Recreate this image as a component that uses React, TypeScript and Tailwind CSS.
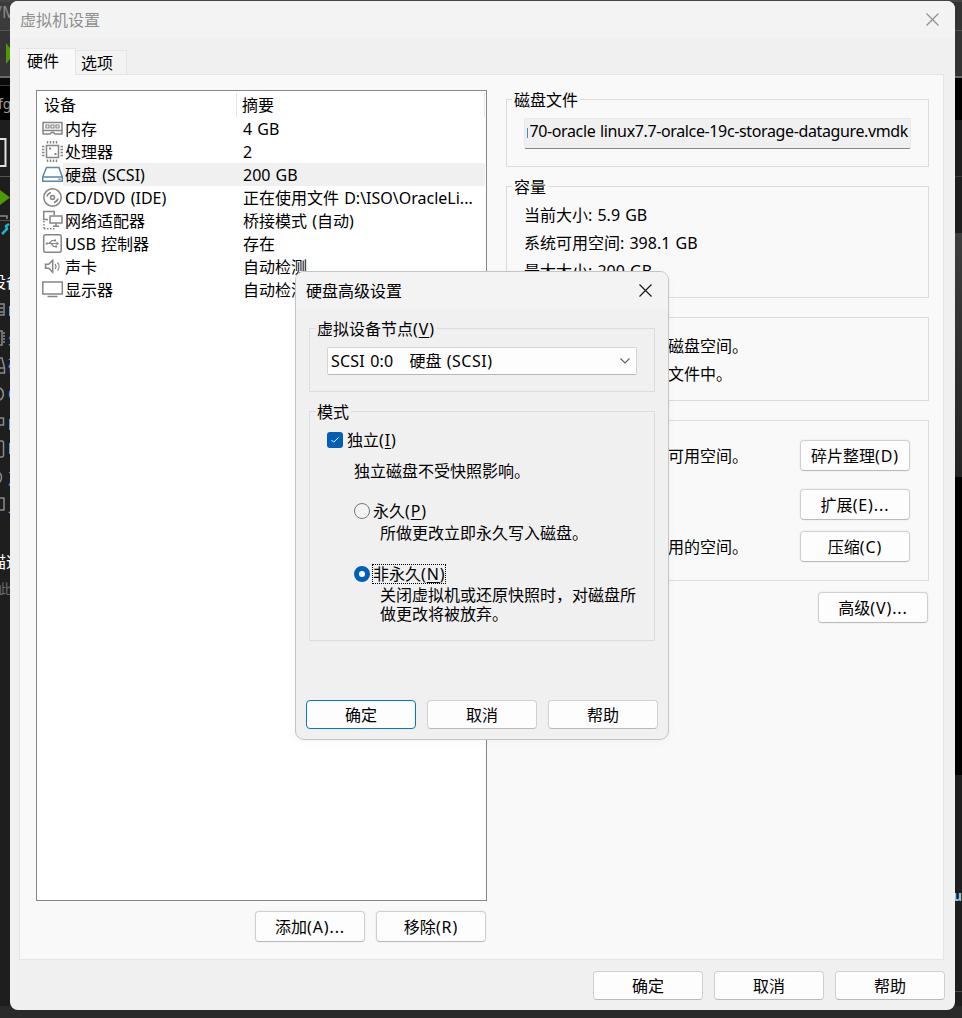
import type { ReactNode } from 'react';
import clsx from 'clsx';

type DeviceIconName = 'memory' | 'cpu' | 'disk' | 'cd' | 'network' | 'usb' | 'sound' | 'display';

interface Device {
  icon: DeviceIconName;
  name: string;
  summary: string;
}

const devices: Device[] = [
  { icon: 'memory', name: '内存', summary: '4 GB' },
  { icon: 'cpu', name: '处理器', summary: '2' },
  { icon: 'disk', name: '硬盘 (SCSI)', summary: '200 GB' },
  { icon: 'cd', name: 'CD/DVD (IDE)', summary: '正在使用文件 D:\\ISO\\OracleLi...' },
  { icon: 'network', name: '网络适配器', summary: '桥接模式 (自动)' },
  { icon: 'usb', name: 'USB 控制器', summary: '存在' },
  { icon: 'sound', name: '声卡', summary: '自动检测' },
  { icon: 'display', name: '显示器', summary: '自动检测' },
];

const iconShapes: Record<DeviceIconName, ReactNode> = {
  memory: (
    <>
      <path d="M1 5.500h19v8H1zM1 13.500v3.500h7l1.500-1.500h2l1.500 1.500h7v-3.500" />
      <path d="M4 8h3v3H4zM9 8h3v3H9zM14 8h3v3h-3z" strokeWidth="1.200" />
    </>
  ),
  cpu: (
    <>
      <path d="M4.500 5.500h12v12h-12z" />
      <path d="M5.500 1v2.500M8.500 1v2.500M11.500 1v2.500M14.500 1v2.500M5.500 19.500V22M8.500 19.500V22M11.500 19.500V22M14.500 19.500V22M0 6.500h2.500M0 9.500h2.500M0 12.500h2.500M0 15.500h2.500M18.500 6.500H21M18.500 9.500H21M18.500 12.500H21M18.500 15.500H21" />
      <path d="M7 8.500h2M12.500 14h2" strokeWidth="2" />
    </>
  ),
  disk: (
    <>
      <path d="M4.500 4.500h12.500L20.300 14v4.300H.7V14z" />
      <path d="M1 14h19.500M16.500 16.300h2" />
    </>
  ),
  cd: (
    <>
      <circle cx="10.500" cy="11.500" r="8.700" />
      <circle cx="10.500" cy="11.500" r="2" />
      <path d="M5 10.500a5.500 5.500 0 0 1 4-4M16 12.500a5.500 5.500 0 0 1-4 4" />
    </>
  ),
  network: (
    <>
      <path d="M6 10.500H1.700v-8h10.500v3.500" />
      <path d="M8 7h12v7H8zM14 14v3M11 17.300h6" />
      <path d="M2 12v8M2 19.700h12" strokeDasharray="1.500 1.500" />
    </>
  ),
  usb: (
    <>
      <rect x="1.700" y="2.700" width="17.500" height="17.500" rx="2" />
      <path d="M5 11.500h11M7 11.500l3-3h2M9 11.500l2.500 3H14" strokeWidth="1.200" />
      <path d="M14.500 9.500l2.500 2-2.500 2zM12 7.500h2v2h-2zM13 13.500h2v2h-2zM3.800 10.500h2v2h-2z" fill="currentColor" stroke="none" />
    </>
  ),
  sound: (
    <>
      <path d="M3.500 9.300h3.200l4-4v12l-4-4H3.500z" />
      <path d="M13 9a4 4 0 0 1 0 5M15.500 7.500a6 6 0 0 1 0 8" strokeWidth="1.200" />
    </>
  ),
  display: (
    <>
      <path d="M.8 4h19.500v12H.8z" />
      <path d="M5.500 18.500h10" />
    </>
  ),
};

function DeviceIcon({ name }: { name: DeviceIconName }) {
  return (
    <svg
      viewBox="0 0 22 23"
      fill="none"
      stroke="currentColor"
      strokeWidth="1.500"
      className={clsx('h-[23px] w-[22px] shrink-0', name === 'disk' ? 'text-[#5b87ad]' : 'text-[#858585]')}
    >
      {iconShapes[name]}
    </svg>
  );
}

function CloseIcon({ className }: { className: string }) {
  return (
    <svg viewBox="0 0 13 13" fill="none" stroke="currentColor" strokeWidth="1.200" className={clsx('size-[13px]', className)}>
      <path d="M.5.500l12 12M12.500.500l-12 12" />
    </svg>
  );
}

// Latin runs are set a little wider than the Chinese text beside them
function Latin({ children }: { children: ReactNode }) {
  return <span className="tracking-[0.900px]">{children}</span>;
}

function Mnemonic({ letter }: { letter: string }) {
  return (
    <Latin>
      (<u className="underline-offset-2">{letter}</u>)
    </Latin>
  );
}

function Button({ children, primary, tall }: { children: ReactNode; primary?: boolean; tall?: boolean }) {
  return (
    <button
      className={clsx(
        'flex w-[110px] shrink-0 items-center justify-center rounded-[4px] border bg-[#fdfdfd] leading-5',
        tall ? 'h-[31px] pt-px shadow-[0_0_0_1px_#f2f2f2]' : 'h-[29px]',
        primary ? 'border-[#0078d4]' : 'border-[#d0d0d0] border-b-[#bababa]',
      )}
    >
      {children}
    </button>
  );
}

function Group({ title, className, children }: { title: ReactNode; className: string; children: ReactNode }) {
  return (
    <fieldset className={clsx('border border-[#dcdcdc]', className)}>
      <legend className="ml-[5px] h-[19px] px-0.5 leading-[21px]">{title}</legend>
      {children}
    </fieldset>
  );
}

function DeviceList() {
  return (
    <div className="h-[811px] w-[451px] border border-[#828790] bg-white pt-0.5">
      <div className="flex h-6 leading-6">
        <div className="w-[200px] border-r border-[#e5e5e5] pl-[7px]">设备</div>
        <div className="w-[248px] border-r border-[#e5e5e5] pl-[5px]">摘要</div>
      </div>
      {devices.map((device) => (
        <div key={device.icon} className="flex h-[23px] pl-[5px] leading-6">
          <DeviceIcon name={device.icon} />
          <div className={clsx('-ml-px flex h-[23px] w-[422px]', device.icon === 'disk' && 'bg-[#f0f0f0]')}>
            <span className="w-[180px] pl-0.5 whitespace-nowrap">{device.name}</span>
            <span className="whitespace-nowrap">{device.summary}</span>
          </div>
        </div>
      ))}
    </div>
  );
}

function DiskDetails() {
  return (
    <div className="flex w-[423px] flex-col">
      <Group title="磁盘文件" className="h-[77px]">
        <div className="mt-[9px] ml-[17px] flex h-[31px] w-[387px] items-start justify-end overflow-hidden rounded-[2px] border border-[#e8e8e8] border-b-[#868686] bg-[#f0f0f0] px-0.5 leading-[25px] whitespace-nowrap">
          <span className="mt-[9px] mr-px h-2.5 w-px shrink-0 bg-[#3c8ad8]" />
          <span className="tracking-[-0.370px]">70-oracle linux7.7-oralce-19c-storage-datagure.vmdk</span>
        </div>
      </Group>
      <Group title="容量" className="mt-2.5 h-[121px]">
        <div className="ml-[17px] pt-[5px] leading-7">
          <p>当前大小: 5.9 GB</p>
          <p>系统可用空间: 398.1 GB</p>
          <p>最大大小: 200 GB</p>
        </div>
      </Group>
      <div className="mt-[19px] h-[84px] border border-[#dcdcdc] pt-[14px] pl-[17px] leading-7">
        <p>没有为此硬盘预分配磁盘空间。</p>
        <p>硬盘内容存储在多个文件中。</p>
      </div>
      <div className="mt-[19px] flex h-[161px] flex-col border border-[#dcdcdc] pt-[19px] pr-[18px] pl-[17px]">
        <div className="flex items-center justify-between">
          <span>整理文件碎片并整合可用空间。</span>
          <Button tall>
            碎片整理<Latin>(D)</Latin>
          </Button>
        </div>
        <div className="mt-[18px] flex justify-end">
          <Button tall>
            扩展<Latin>(E)...</Latin>
          </Button>
        </div>
        <div className="mt-[11px] flex items-center justify-between">
          <span>压缩磁盘以回收未使用的空间。</span>
          <Button tall>
            压缩<Latin>(C)</Latin>
          </Button>
        </div>
      </div>
      <div className="mt-[11px] flex justify-end pr-px">
        <Button tall>
          高级<Latin>(V)...</Latin>
        </Button>
      </div>
    </div>
  );
}

function SettingsWindow() {
  return (
    <div className="absolute top-px left-[10px] flex h-[1009px] w-[945px] flex-col overflow-hidden rounded-[8px] bg-[#f0f0f0]">
      <div className="flex h-[37px] shrink-0 items-center justify-between bg-[#f3f3f3] pr-4 pl-[10px] text-[#8f8f8f]">
        <span>虚拟机设置</span>
        <CloseIcon className="text-[#8f8f8f]" />
      </div>
      <div className="flex h-9 shrink-0 items-end pl-[9px]">
        <div className="relative -mb-px h-[27px] w-[57px] border border-b-0 border-[#e5e5e5] bg-[#f9f9f9] pl-[7px] leading-[25px]">硬件</div>
        <div className="h-6 w-[51px] border border-b-0 border-l-0 border-[#e5e5e5] bg-[#f3f3f3] pl-[5px] leading-[24px]">选项</div>
      </div>
      <div className="ml-[9px] flex h-[886px] w-[925px] shrink-0 border border-[#e5e5e5] bg-[#f9f9f9] pt-[15px] pl-4">
        <div className="flex flex-col">
          <DeviceList />
          <div className="mt-2.5 flex justify-end gap-[11px] pr-px">
            <Button tall>
              添加<Latin>(A)...</Latin>
            </Button>
            <Button tall>
              移除<Latin>(R)</Latin>
            </Button>
          </div>
        </div>
        <div className="ml-[19px]">
          <DiskDetails />
        </div>
      </div>
      <div className="mt-[11px] flex justify-end gap-[11px] pr-[10px]">
        <Button>确定</Button>
        <Button>取消</Button>
        <Button>帮助</Button>
      </div>
    </div>
  );
}

function AdvancedDialog() {
  return (
    <div className="absolute top-[271px] left-[295px] flex h-[469px] w-[374px] flex-col overflow-hidden rounded-[9px] border border-[#c4c4c4] bg-[#f0f0f0] shadow-[0_2px_8px_rgba(0,0,0,0.040)]">
      <div className="flex h-[37px] shrink-0 items-center justify-between bg-[#f3f3f3] pr-4 pl-[10px]">
        <span>硬盘高级设置</span>
        <CloseIcon className="text-[#1a1a1a]" />
      </div>
      <div className="mt-[10px] ml-[13px] w-[346px]">
        <Group title={<>虚拟设备节点<Mnemonic letter="V" /></>} className="h-[73px]">
          <div className="mt-[9px] ml-[17px] flex h-7 w-[310px] items-center justify-between rounded-[2px] border border-[#d4d4d4] border-b-[#b8b8b8] bg-[#fdfdfd] pr-1.5 pl-[3px]">
            <span className="whitespace-pre">
              <span className="tracking-[0.200px]">SCSI 0:0{'   '}</span>硬盘 <span className="tracking-[0.500px]">(SCSI)</span>
            </span>
            <svg viewBox="0 0 10 6" fill="none" stroke="#606060" strokeWidth="1.100" className="h-1.5 w-2.5">
              <path d="M.5.500L5 5 9.500.500" />
            </svg>
          </div>
        </Group>
        <Group title="模式" className="mt-2.5 h-[239px]">
          <div className="mt-2.5 ml-[17px] flex h-[18px] items-center gap-1">
            <span className="flex size-4 items-center justify-center rounded-[3px] bg-[#005fb8]">
              <svg viewBox="0 0 8 6" fill="none" stroke="white" strokeWidth="1" className="h-1.5 w-2">
                <path d="M.5 3l2.200 2.200L7.500.500" />
              </svg>
            </span>
            <span>独立<Mnemonic letter="I" /></span>
          </div>
          <p className="mt-3 ml-11 leading-5">独立磁盘不受快照影响。</p>
          <div className="mt-[21px] ml-11 flex h-[18px] items-center gap-[3px]">
            <span className="size-4 rounded-full border border-[#767676] bg-[#f3f3f3]" />
            <span>永久<Mnemonic letter="P" /></span>
          </div>
          <p className="mt-[3px] ml-[70px] leading-5">所做更改立即永久写入磁盘。</p>
          <div className="mt-[21px] ml-11 flex h-[19px] items-center gap-[3px]">
            <span className="size-4 rounded-full border-[5px] border-[#005fb8] bg-white" />
            <span className="-ml-px h-5 w-[74px] border border-dotted border-black leading-[18px] whitespace-nowrap">
              非永久<Mnemonic letter="N" />
            </span>
          </div>
          <p className="mt-[3px] ml-[70px] w-[264px] leading-[19px]">关闭虚拟机或还原快照时，对磁盘所做更改将被放弃。</p>
        </Group>
      </div>
      <div className="mt-[59px] flex gap-[11px] pl-[10px]">
        <Button primary>确定</Button>
        <Button>取消</Button>
        <Button>帮助</Button>
      </div>
    </div>
  );
}

// Slivers of the main application window that stick out on both sides
function Backdrop() {
  return (
    <>
      <div className="absolute inset-y-0 left-0 w-[20px] overflow-hidden bg-[#1e1e1e] whitespace-nowrap">
        <div className="h-[30px] bg-[#3b3b3b]" />
        <div className="h-[46px] border-t border-[#555] bg-[#343434]" />
        <div className="h-0.5 bg-[#6a6a6a]" />
        <div className="h-[7px] bg-[#0a0a0a]" />
        <div className="h-[35px] border-t border-[#3a3a3a] bg-black" />
        <span className="absolute top-0 -left-1 leading-6 text-[#8a8a8a]">/M</span>
        <span className="absolute top-[94px] -left-0.5 text-sm leading-5 text-[#9a9a9a]">fg</span>
        <svg viewBox="0 0 10 620" fill="none" stroke="#8a8a8a" strokeWidth="1.500" className="absolute top-0 left-0 h-[620px] w-[10px]">
          <path d="M6 43l8 10.500L6 64zM0 190l10 7.500L0 205z" fill="#4e9a06" stroke="none" />
          <path d="M-2 139H5.500v27H-2" stroke="#e0e0e0" strokeWidth="2" />
          <path d="M0 176.500h10M0 220.500h10" stroke="#555" strokeWidth="1" />
          <path d="M0 216h7v3" />
          <path d="M2 234l5-5-1-3 3-2" stroke="#16b5d0" strokeWidth="2.500" />
          <path d="M0 304h4v11H0M0 308h3M0 312h3" />
          <path d="M0 331h2v14H0M3 333h2M3 336h2M3 339h2M3 342h2" />
          <path d="M0 358h2l2.500 10v5H0M0 368h4" />
          <path d="M0 388a7 7 0 0 1 0 12M0 418h3.500v7H0M0 441h2q1.500 0 1.500 2v12q0 2-1.500 2H0M0 473q3 4 0 9M0 498h4v12H0" />
          <path d="M9.500 306v10M9.500 419v11M9.500 443v11" stroke="#5a9de0" strokeWidth="1" />
        </svg>
        <span className="absolute top-[272px] -left-2.5 leading-5 text-white">设备</span>
        <span className="absolute top-[328px] left-2 leading-5 text-[#5a9de0]">处</span>
        <span className="absolute top-[356px] left-2 leading-5 text-[#5a9de0]">硬</span>
        <span className="absolute top-[384px] left-2 leading-5 text-[#5a9de0]">C</span>
        <span className="absolute top-[468px] left-2 leading-5 text-[#5a9de0]">声</span>
        <span className="absolute top-[496px] left-2 leading-5 text-[#5a9de0]">显</span>
        <span className="absolute top-[552px] -left-2.5 leading-5 text-white">描述</span>
        <span className="absolute top-[579px] -left-0.5 text-sm leading-5 text-[#6a6a6a]">此</span>
      </div>
      <div className="absolute inset-y-0 right-0 w-[20px] overflow-hidden bg-[#1e1e1e]">
        <div className="h-[30px] bg-[#333]" />
        <div className="h-[46px] border-t border-[#505050] bg-[#333]" />
        <div className="h-0.5 bg-[#6a6a6a]" />
        <div className="h-[42px] bg-black" />
        <div className="h-[56px] bg-[#1e1e1e]" />
        <div className="h-[57px] border-t border-[#383838] bg-[#1e1e1e]" />
        <div className="h-[244px] bg-gradient-to-b from-[#3d3d3d] to-[#242424]" />
        <div className="h-[298px] bg-black" />
        <div className="h-[217px] border-b border-[#4a4a4a]" />
        <span className="absolute top-[886px] left-[11px] text-sm leading-5 font-bold text-[#8ec8f8]">ur</span>
      </div>
      <div className="absolute inset-x-0 bottom-0 h-[12px] bg-[#2a2a2a]" />
      <div className="absolute inset-x-0 top-0 h-0.5 bg-[#444]" />
    </>
  );
}

export default function App() {
  return (
    <div className="relative h-[1018px] w-[962px] overflow-hidden bg-[#1e1e1e] font-['Noto_Sans','Noto_Sans_CJK_SC',sans-serif] text-base text-black [word-spacing:1px]">
      <Backdrop />
      <SettingsWindow />
      <AdvancedDialog />
    </div>
  );
}
